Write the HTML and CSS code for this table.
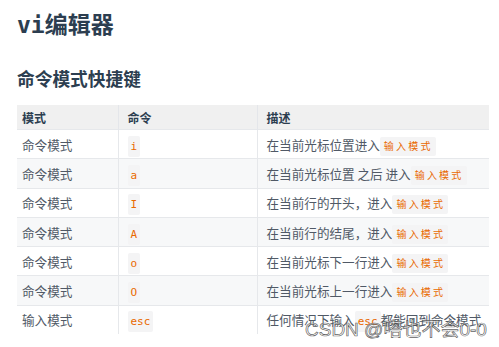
FILE: index.html
```html
<!DOCTYPE html>
<html>
<head>
<meta charset="utf-8">
<link rel="stylesheet" href="styles.css">
</head>
<body>
<div class="page">
  <h1 class="title"><span class="mono">vi</span>编辑器</h1>
  <h2 class="sub">命令模式快捷键</h2>
  <div class="clip">
    <table class="tbl">
      <colgroup><col class="c1"><col class="c2"><col class="c3"></colgroup>
      <thead>
        <tr><th class="first">模式</th><th>命令</th><th>描述</th></tr>
      </thead>
      <tbody>
        <tr><td class="first">命令模式</td><td><code>i</code></td><td>在当前光标位置进入<code class="cjk">输入模式</code></td></tr>
        <tr><td class="first">命令模式</td><td><code>a</code></td><td>在当前光标位置 之后 进入<code class="cjk">输入模式</code></td></tr>
        <tr><td class="first">命令模式</td><td><code>I</code></td><td>在当前行的开头，进入<code class="cjk">输入模式</code></td></tr>
        <tr><td class="first">命令模式</td><td><code>A</code></td><td>在当前行的结尾，进入<code class="cjk">输入模式</code></td></tr>
        <tr><td class="first">命令模式</td><td><code>o</code></td><td>在当前光标下一行进入<code class="cjk">输入模式</code></td></tr>
        <tr><td class="first">命令模式</td><td><code>O</code></td><td>在当前光标上一行进入<code class="cjk">输入模式</code></td></tr>
        <tr><td class="first">输入模式</td><td><code>esc</code></td><td>任何情况下输入<code>esc</code>都能回到命令模式</td></tr>
      </tbody>
    </table>
  </div>
</div>
<div class="watermark">CSDN @嗒也不会0-0</div>
</body>
</html>
```
FILE: styles.css
```css
html, body {
  margin: 0;
  padding: 0;
  background: #fff;
}
body {
  font-family: "Noto Sans CJK SC", "Noto Sans", sans-serif;
  color: #2c3e50;
  width: 499px;
  height: 347px;
  overflow: hidden;
  position: relative;
}
.page {
  padding: 9px 10px 0 17px;
}
.title {
  margin: 0;
  font-size: 23px;
  line-height: 29px;
  font-weight: 700;
  color: #2c3e50;
}
.mono {
  font-family: "DejaVu Sans Mono", monospace;
}
.sub {
  margin: 28px 0 0 0;
  font-size: 17.7px;
  line-height: 21px;
  font-weight: 700;
  color: #2c3e50;
}
.clip {
  margin-top: 16px;
  height: 229px;
  overflow: hidden;
}
.tbl {
  border-collapse: collapse;
  width: 472px;
  font-size: 12.6px;
  table-layout: fixed;
}
.c1 { width: 101px; }
.c2 { width: 139px; }
.c3 { width: 232px; }
.tbl th {
  background: #f0f0f0;
  text-align: left;
  font-weight: 700;
  font-size: 12px;
  color: #2c3e50;
  height: 24px;
  padding: 0 9px;
  border-left: 1px solid #e4e6ea;
}
.tbl td {
  height: 28.3px;
  padding: 0 9px;
  color: #505966;
  border-top: 1px solid #e6e8eb;
  border-left: 1px solid #e6e8eb;
  white-space: nowrap;
}
.tbl th.first, .tbl td.first {
  padding-left: 5px;
  border-left: none;
}
.tbl tbody tr:nth-child(even) td {
  background: #f7f8f9;
}
code {
  font-family: "DejaVu Sans Mono", "Noto Sans CJK SC", monospace;
  font-size: 11px;
  color: #e96900;
  background: #f4f4f5;
  padding: 4px 3px;
  border-radius: 2px;
}
code.cjk {
  font-size: 10px;
  letter-spacing: 2.2px;
  padding: 4px 3px 4px 4px;
}
.watermark {
  position: absolute;
  left: 305px;
  top: 318px;
  font-family: "Liberation Sans", "Noto Sans CJK SC", sans-serif;
  font-size: 19px;
  line-height: 24px;
  color: rgba(255, 255, 255, 0.6);
  -webkit-text-stroke: 0.7px rgba(70, 70, 70, 0.85);
  white-space: nowrap;
}
```
